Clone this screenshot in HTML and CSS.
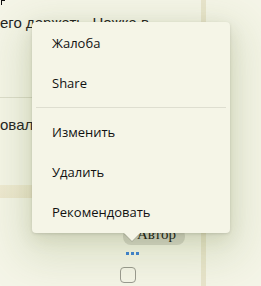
FILE: index.html
```html
<!DOCTYPE html>
<html lang="ru">
<head>
<meta charset="utf-8">
<link rel="stylesheet" href="styles.css">
</head>
<body>
<div class="page">
  <div class="content">
    <div class="corner"></div>
    <p class="text line1">его держать. Ножка в</p>
    <div class="hline"></div>
    <p class="text line2">овали</p>
    <div class="band"></div>
    <div class="pill">Автор</div>
    <div class="dots"><span></span><span></span><span></span></div>
    <div class="check"></div>
  </div>
  <div class="vrule"></div>
  <div class="rest"></div>
</div>
<div class="menu">
  <div class="item">Жалоба</div>
  <div class="item">Share</div>
  <div class="sep"></div>
  <div class="item">Изменить</div>
  <div class="item">Удалить</div>
  <div class="item">Рекомендовать</div>
</div>
</body>
</html>
```
FILE: styles.css
```css
html, body {
  margin: 0;
  padding: 0;
  background: #f5f5e8;
  overflow: hidden;
}
body {
  width: 261px;
  height: 286px;
  position: relative;
  font-family: "Open Sans", "Noto Sans", sans-serif;
}
.page {
  display: flex;
  height: 286px;
}
.content {
  width: 201px;
  display: flex;
  flex-direction: column;
  align-items: flex-start;
}
.corner {
  width: 4px;
  height: 5px;
  border-left: 1px solid #111;
  border-top: 1px solid #111;
  margin-left: 1px;
  box-sizing: border-box;
}
.text {
  margin: 0;
  font-family: "Liberation Sans", Arial, sans-serif;
  font-size: 15px;
  line-height: 18px;
  color: #222;
  white-space: nowrap;
}
.line1 { margin-top: 9px; }
.hline {
  width: 201px;
  height: 1px;
  background: #dcdccb;
  margin-top: 65px;
}
.line2 { margin-top: 18px; }
.band {
  width: 201px;
  height: 13px;
  margin-top: 51px;
  background: linear-gradient(#efead3, #ede7cf);
}
.pill {
  margin-top: 30px;
  margin-left: 123px;
  width: 62px;
  height: 17px;
  box-sizing: border-box;
  padding-left: 14px;
  border-radius: 8px;
  background: #d7d7cb;
  font-family: "Liberation Serif", "Times New Roman", serif;
  font-size: 15px;
  line-height: 13px;
  color: #111;
}
.dots {
  display: flex;
  gap: 2px;
  margin-left: 126px;
  margin-top: 7px;
}
.dots span {
  width: 3px;
  height: 3px;
  background: #3d82d8;
}
.check {
  width: 16px;
  height: 16px;
  box-sizing: border-box;
  margin-left: 120px;
  margin-top: 12px;
  border: 1px solid #9a9a90;
  border-radius: 4px;
  background: #f5f5e8;
}
.vrule {
  width: 5px;
  background: #e9e5cd;
}
.rest { flex: 1; }

.menu {
  position: absolute;
  left: 32px;
  top: 22px;
  width: 198px;
  box-sizing: border-box;
  padding: 1px 0 1px;
  background: #f5f5e7;
  border-radius: 4px;
  box-shadow: 0 1px 3px rgba(0,0,0,0.12), 0 6px 18px rgba(60,60,20,0.11), 0 14px 44px 12px rgba(100,130,50,0.17);
}
.menu::after {
  content: "";
  position: absolute;
  left: 92px;
  bottom: -8px;
  width: 0;
  height: 0;
  border-left: 8px solid transparent;
  border-right: 8px solid transparent;
  border-top: 8px solid #f5f5e7;
  filter: drop-shadow(0 1px 0 rgba(0,0,0,0.12));
}
.item {
  height: 40px;
  line-height: 40px;
  padding-left: 20px;
  font-size: 13px;
  color: #111;
}
.sep {
  height: 1px;
  margin: 4px 4px 4px;
  background: #deded0;
}
```
